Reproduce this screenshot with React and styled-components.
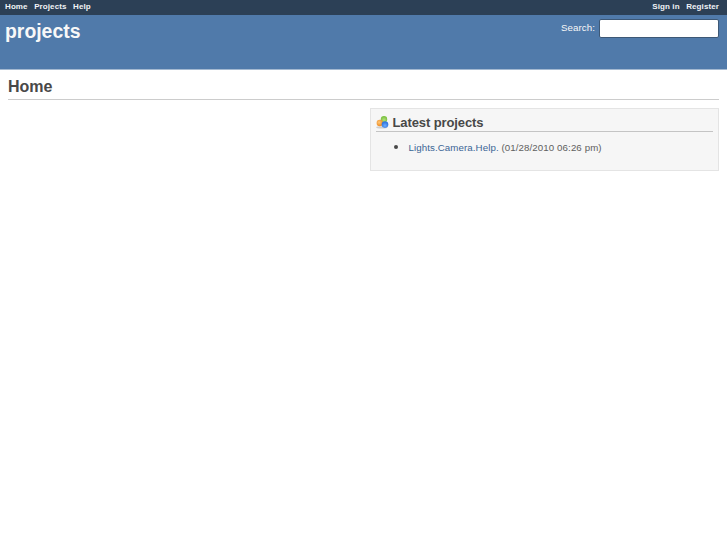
import styled, { createGlobalStyle } from 'styled-components';

const App = () => (
	<>
		<GlobalStyle />
		<TopMenu>
			<MenuList>
				<MenuLink href="#">Home</MenuLink>
				<MenuLink href="#">Projects</MenuLink>
				<MenuLink href="#">Help</MenuLink>
			</MenuList>
			<MenuList>
				<MenuLink href="#">Sign in</MenuLink>
				<MenuLink href="#">Register</MenuLink>
			</MenuList>
		</TopMenu>
		<Header>
			<SiteTitle>projects</SiteTitle>
			<Search>
				<label htmlFor="q">Search:</label>
				<SearchInput id="q" />
			</Search>
		</Header>
		<Content>
			<PageTitle>Home</PageTitle>
			<Box>
				<BoxTitle>
					<ProjectsIcon />
					Latest projects
				</BoxTitle>
				<ProjectList>
					<li>
						<a href="#">Lights.Camera.Help.</a> (01/28/2010 06:26 pm)
					</li>
				</ProjectList>
			</Box>
		</Content>
	</>
);

// three glossy balls: green on top, orange left, blue right
const ProjectsIcon = () => (
	<svg width="13" height="13" viewBox="0 0 13 13">
		<defs>
			<radialGradient id="green" cx="0.5" cy="0.6">
				<stop offset="0" stopColor="#b4e07c" />
				<stop offset="1" stopColor="#7cc242" />
			</radialGradient>
			<radialGradient id="orange" cx="0.4" cy="0.4">
				<stop offset="0" stopColor="#ffc878" />
				<stop offset="1" stopColor="#f09430" />
			</radialGradient>
			<radialGradient id="blue" cx="0.5" cy="0.65">
				<stop offset="0" stopColor="#6cacff" />
				<stop offset="1" stopColor="#3478e0" />
			</radialGradient>
		</defs>
		<ellipse cx="5.8" cy="11.4" rx="5.6" ry="1.1" fill="#000" opacity="0.16" />
		<circle cx="8" cy="3.2" r="3.2" fill="url(#green)" />
		<circle cx="3.8" cy="7" r="3.2" fill="url(#orange)" />
		<circle cx="9" cy="8.6" r="3.3" fill="url(#blue)" />
	</svg>
);

export default App;

const GlobalStyle = createGlobalStyle`
	body {
		margin: 0;
		background: #fff;
		color: #484848;
		font-family: "Liberation Sans", Arial, sans-serif;
		font-size: 9.7px;
	}
`

const TopMenu = styled.nav`
	display: flex;
	justify-content: space-between;
	height: 15px;
	padding: 0 8px 0 5px;
	background: #2c4056;
`

const MenuList = styled.div`
	display: flex;
	gap: 6.5px;
`

const MenuLink = styled.a`
	color: #f0f3f6;
	font-size: 8px;
	font-weight: bold;
	letter-spacing: 0.1px;
	line-height: 14px;
	text-decoration: none;
`

const Header = styled.header`
	display: flex;
	justify-content: space-between;
	box-sizing: border-box;
	height: 55px;
	padding: 4px 8px 0 5px;
	border-bottom: 1px solid #a4b9d1;
	background: #507aaa;
	color: #f8f8f8;
`

const SiteTitle = styled.h1`
	margin: 0;
	font-size: 19.4px;
	line-height: 25px;
`

const Search = styled.div`
	display: flex;
	gap: 4px;
	letter-spacing: 0.1px;
	line-height: 17px;
`

const SearchInput = styled.input`
	box-sizing: border-box;
	width: 120px;
	height: 19px;
	border: 1px solid #3d5876;
	border-radius: 2px;
	background: #fff;
`

const Content = styled.main`
	padding: 6px 8px;
`

const PageTitle = styled.h2`
	margin: 0 0 8px;
	padding-bottom: 1px;
	border-bottom: 1px solid #ccc;
	font-size: 16px;
	line-height: 22px;
`

const Box = styled.section`
	box-sizing: border-box;
	width: 349px;
	height: 63px;
	margin-left: auto;
	padding: 5px;
	border: 1px solid #e4e4e4;
	background: #f6f6f6;
	color: #606060;
`

const BoxTitle = styled.h3`
	display: flex;
	align-items: center;
	gap: 3.5px;
	margin: 0;
	border-bottom: 1px solid #c4c4c4;
	color: #484848;
	font-size: 13px;
	letter-spacing: -0.1px;
	line-height: 17px;
`

const ProjectList = styled.ul`
	margin: 8px 0 0;
	padding-left: 32.5px;
	letter-spacing: 0.1px;
	line-height: 13px;

	li::marker {
		color: #484848;
		font-size: 13px;
	}

	a {
		color: #3a6595;
		text-decoration: none;
	}
`
